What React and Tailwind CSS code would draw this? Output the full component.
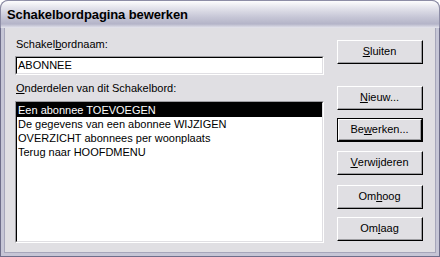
import React from 'react';

const font = { fontFamily: 'Tahoma, "Liberation Sans", Arial, sans-serif' };

function Key({ children }) {
  return <span className="underline underline-offset-[1px]">{children}</span>;
}

function Button({ children, isDefault, className = '' }) {
  return (
    <div className={`w-[86px] h-[24px] ${isDefault ? 'border border-black' : ''} ${className}`}>
      <div className="w-full h-full border-t border-l border-white border-b border-r border-b-black border-r-black">
        <div className="w-full h-full border-b border-r border-[#9d9da1] flex items-center justify-center text-[11px] text-black bg-[#e0dfe3]">
          {children}
        </div>
      </div>
    </div>
  );
}

function Sunken({ children, className = '' }) {
  return (
    <div className={`border border-[#9d9da1] border-b-white border-r-white ${className}`}>
      <div className="w-full h-full border border-black border-b-[#e0dfe3] border-r-[#e0dfe3] bg-white">
        {children}
      </div>
    </div>
  );
}

const items = [
  'Een abonnee TOEVOEGEN',
  'De gegevens van een abonnee WIJZIGEN',
  'OVERZICHT abonnees per woonplaats',
  'Terug naar HOOFDMENU',
];

export default function App() {
  return (
    <div className="w-[440px] h-[257px] flex flex-col bg-[#8b8ba3] rounded-t-[8px] overflow-hidden" style={font}>
      <div className="h-[28px] shrink-0 flex items-center pl-[6px] bg-[linear-gradient(to_bottom,#fdfdfe_0%,#e4e4ec_25%,#c6c6d6_60%,#b4b4c8_85%,#e6e6ee_100%)] border border-b-0 border-[#8d8da6] rounded-t-[8px]">
        <span className="text-[13px] font-bold text-black tracking-[-0.1px]" style={{ fontFamily: '"Liberation Sans", Arial, sans-serif' }}>
          Schakelbordpagina bewerken
        </span>
      </div>
      <div className="flex-1 flex border-x border-b border-[#6e6e8a]">
        <div className="flex-1 flex border-x-[3px] border-b-[3px] border-[#c6c6d6]">
          <div className="flex-1 flex bg-[#e0dfe3] border-x border-b border-[#a6a6ba]">
            <div className="w-[309px] ml-[10px] pt-[10px] flex flex-col">
              <div className="h-[13px] leading-[13px] text-[11px] text-black pl-[1px]">
                Schakel<Key>b</Key>ordnaam:
              </div>
              <Sunken className="mt-[5px] h-[19px]">
                <div className="text-[11px] leading-[15px] pl-[1px] text-black">ABONNEE</div>
              </Sunken>
              <div className="mt-[7px] h-[13px] leading-[13px] text-[11px] text-black pl-[1px]">
                <Key>O</Key>nderdelen van dit Schakelbord:
              </div>
              <Sunken className="mt-[6px] h-[142px]">
                <div className="flex flex-col">
                  {items.map((t, i) => (
                    <div
                      key={i}
                      className={`h-[14px] leading-[14px] text-[11px] pl-[1px] whitespace-nowrap ${i === 0 ? 'bg-black text-white' : 'text-black'}`}
                    >
                      {t}
                    </div>
                  ))}
                </div>
              </Sunken>
            </div>
            <div className="ml-[13px] pt-[12px] flex flex-col">
              <Button><Key>S</Key>luiten</Button>
              <Button className="mt-[22px]"><Key>N</Key>ieuw...</Button>
              <Button isDefault className="mt-[8px]">Be<Key>w</Key>erken...</Button>
              <Button className="mt-[9px]"><Key>V</Key>erwijderen</Button>
              <Button className="mt-[10px]">Om<Key>h</Key>oog</Button>
              <Button className="mt-[8px]">Om<Key>l</Key>aag</Button>
            </div>
          </div>
        </div>
      </div>
    </div>
  );
}
